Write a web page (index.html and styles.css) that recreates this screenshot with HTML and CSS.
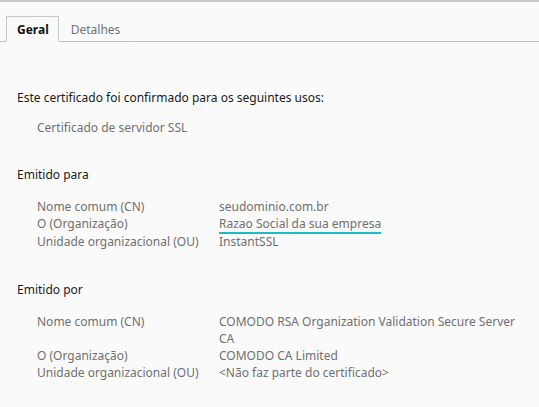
FILE: index.html
```html
<!DOCTYPE html>
<html lang="pt">
<head>
<meta charset="UTF-8">
<title>Certificado</title>
<link rel="stylesheet" href="styles.css">
</head>
<body>
<div class="topline"></div>
<div class="tabs">
  <div class="tab active">Geral</div>
  <div class="tab">Detalhes</div>
  <div class="tabfill"></div>
</div>

<div class="content">
  <p class="heading">Este certificado foi confirmado para os seguintes usos:</p>
  <p class="use">Certificado de servidor SSL</p>

  <p class="section">Emitido para</p>
  <table class="fields">
    <tr><td class="label">Nome comum (CN)</td><td class="value">seudominio.com.br</td></tr>
    <tr><td class="label">O (Organização)</td><td class="value"><span class="mark">Razao Social da sua empresa</span></td></tr>
    <tr><td class="label">Unidade organizacional (OU)</td><td class="value">InstantSSL</td></tr>
  </table>

  <p class="section">Emitido por</p>
  <table class="fields">
    <tr><td class="label">Nome comum (CN)</td><td class="value">COMODO RSA Organization Validation Secure Server CA</td></tr>
    <tr><td class="label">O (Organização)</td><td class="value">COMODO CA Limited</td></tr>
    <tr><td class="label">Unidade organizacional (OU)</td><td class="value">&lt;Não faz parte do certificado&gt;</td></tr>
  </table>
</div>
</body>
</html>
```

FILE: styles.css
```css
html, body{
  margin:0;
  padding:0;
}
body{
  background:#fafafa;
  font-family:"Noto Sans", "Open Sans", sans-serif;
  font-size:12px;
  line-height:17px;
  color:#1b1b1b;
}
p{
  margin:0;
}
.topline{
  height:2px;
  background:#c8c8c8;
}
.tabs{
  display:flex;
  margin-top:14px;
  height:26px;
}
.tabs:before{
  content:"";
  width:6px;
  border-bottom:1px solid #c0c0c0;
}
.tab{
  padding:0 10px 0 11px;
  line-height:26px;
  color:#6e7278;
  border:1px solid transparent;
  border-bottom:1px solid #c0c0c0;
}
.tab.active{
  color:#111;
  font-weight:bold;
  padding:0 9px 0 10px;
  border:1px solid #c8c8c8;
  border-bottom:1px solid #fafafa;
}
.tabfill{
  flex:1;
  border-bottom:1px solid #c0c0c0;
}
.content{
  padding:47px 0 0 17px;
}
.heading{
  margin-bottom:13px;
}
.use{
  padding-left:20px;
  color:#707070;
  margin-bottom:30px;
}
.section{
  margin-bottom:15px;
}
.fields{
  border-collapse:collapse;
  margin-left:20px;
  margin-bottom:31px;
}
.fields td{
  padding:0;
  vertical-align:top;
  color:#707070;
}
.fields .label{
  width:182px;
}
.fields .value{
  width:305px;
}
.mark{
  display:inline-block;
  border-bottom:2px solid #1bbcc8;
  line-height:16px;
  padding-top:1px;
  margin-bottom:-1px;
}
```
